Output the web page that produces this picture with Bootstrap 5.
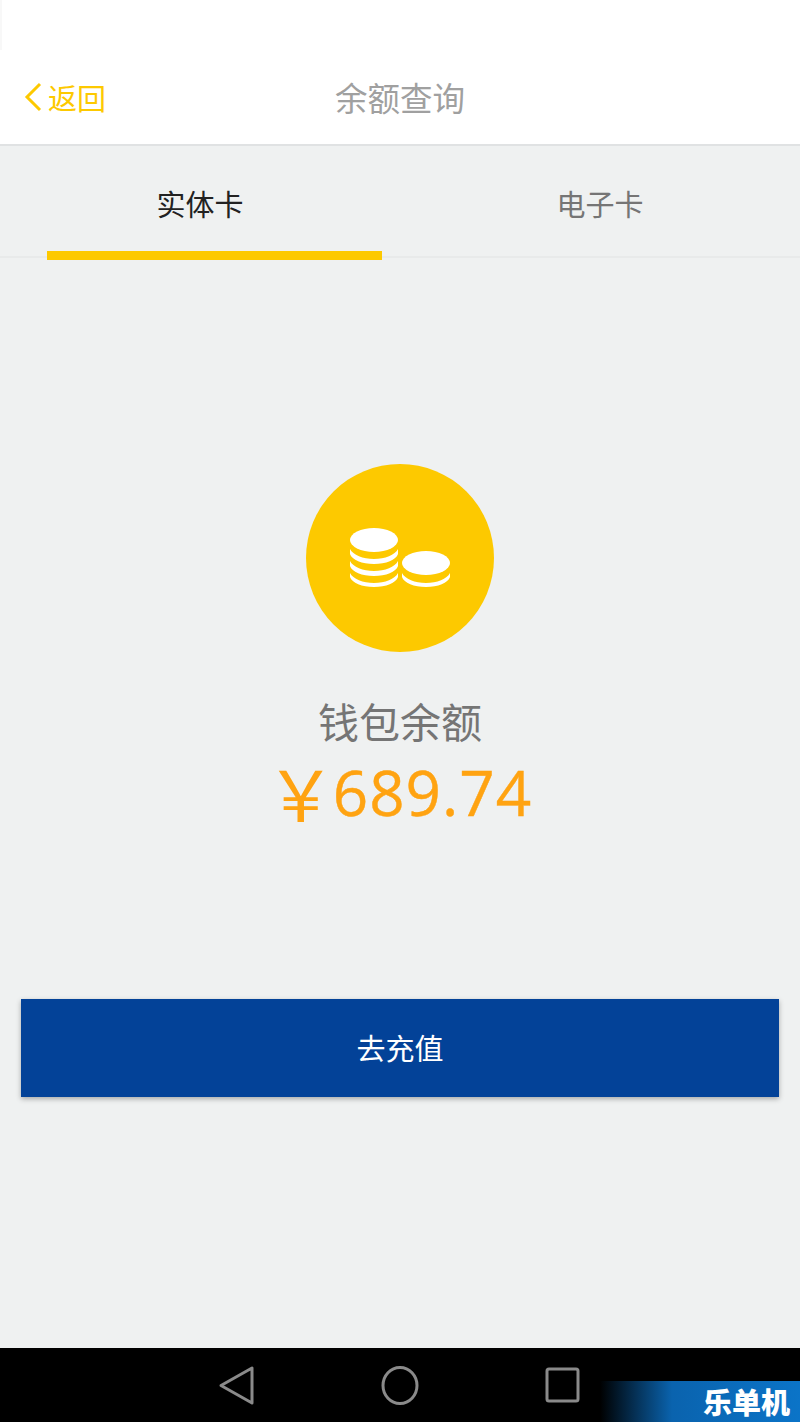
<!DOCTYPE html>
<html lang="zh-CN">
<head>
    <meta charset="UTF-8"/>
    <meta name="viewport" content="width=device-width, initial-scale=1.0"/>
    <title>余额查询</title>
    <link href="https://cdn.jsdelivr.net/npm/bootstrap@5.3.0/dist/css/bootstrap.min.css" rel="stylesheet"/>
    <style>
        html, body { height: 100%; }
        body { background: #eff1f1; font-family: "Noto Sans CJK SC", "Noto Sans", sans-serif; }
        .app-page { height: 1422px; overflow: hidden; }
        .status-space { height: 50px; background: #fff; border-left: 2px solid #f8f8f8; }
        .top-bar { height: 96px; background: #fff; border-bottom: 2px solid #e0e2e3; }
        .back-link { left: 24px; top: 50%; transform: translateY(-50%); color: #fdc900; font-size: 29px; line-height: 1; gap: 5px; }
        .top-title { color: #a0a0a0; font-size: 32.5px; line-height: 1; }
        .tab-row { height: 112px; border-bottom: 2px solid #e8eaea; }
        .tab-item { color: #757575; font-size: 29px; line-height: 1; padding-top: 43px; }
        .tab-item.on { color: #222; }
        .tab-line { left: 47px; bottom: -4px; width: 335px; height: 9px; background: #fdc900; }
        .balance-block { padding-top: 206px; }
        .coin-circle { width: 188px; height: 188px; background: #fdc900; }
        .balance-label { color: #757575; font-size: 41px; line-height: 1; margin-top: 48px; }
        .balance-num { color: #ffa311; font-size: 62px; line-height: 1; margin-top: 16px; font-family: "Open Sans", "Noto Sans CJK SC", sans-serif; letter-spacing: 1px; -webkit-text-stroke: .4px #ffa311; }
        .yen-mark { font-family: "Noto Sans CJK SC", sans-serif; font-size: 70px; line-height: 1; margin-left: -2px; margin-right: -4px; -webkit-text-stroke: 0; }
        .charge-btn { margin: 172px 21px 0; height: 98px; background: #034298; color: #fff; font-size: 29px; box-shadow: 0 2px 5px rgba(0,0,0,.3); }
        .nav-bar { height: 74px; background: #000; }
        .watermark { right: 0; bottom: 0; width: 200px; height: 41px; background: linear-gradient(90deg, #000 0%, #0a63ae 36%, #0b74c8 100%); color: #fff; font-size: 29px; font-weight: 900; line-height: 41px; padding-right: 10px; }
    </style>
</head>
<body>
<div class="app-page d-flex flex-column">
    <div class="status-space"></div>

    <!-- 顶部标题 -->
    <div class="top-bar position-relative d-flex align-items-center justify-content-center">
        <a class="back-link position-absolute d-flex align-items-center text-decoration-none" href="#">
            <svg width="19" height="30" viewBox="0 0 19 30"><path d="M16 2 3 15l13 13" fill="none" stroke="#fdc900" stroke-width="3"/></svg>
            <span>返回</span>
        </a>
        <span class="top-title">余额查询</span>
    </div>

    <!-- 卡片切换 -->
    <div class="tab-row position-relative row g-0">
        <div class="col-6 text-center tab-item on">实体卡</div>
        <div class="col-6 text-center tab-item">电子卡</div>
        <div class="tab-line position-absolute"></div>
    </div>

    <!-- 余额 -->
    <div class="balance-block d-flex flex-column align-items-center">
        <div class="coin-circle rounded-circle d-flex align-items-center justify-content-center">
            <svg width="102" height="60" viewBox="0 0 102 60" fill="#fff">
                <ellipse cx="25" cy="12" rx="24" ry="12"/>
                <path d="M1 21c3 6 13 10 24 10s21-4 24-10v5c-2 6-12 10-24 10S3 32 1 26z"/>
                <path d="M1 33c3 6 13 10 24 10s21-4 24-10v5c-2 6-12 10-24 10S3 44 1 38z"/>
                <path d="M1 45c3 6 13 10 24 10s21-4 24-10v4c-2 6-12 10-24 10S3 55 1 49z"/>
                <ellipse cx="77" cy="35" rx="24" ry="12"/>
                <path d="M53 45c3 6 13 10 24 10s21-4 24-10v4c-2 6-12 10-24 10s-22-4-24-10z"/>
            </svg>
        </div>
        <div class="balance-label">钱包余额</div>
        <div class="balance-num d-flex align-items-center"><span class="yen-mark">￥</span>689.74</div>
    </div>

    <button type="button" class="charge-btn btn rounded-0 border-0 d-block">去充值</button>

    <div class="flex-grow-1"></div>

    <!-- 系统导航 -->
    <div class="nav-bar position-relative flex-shrink-0">
        <svg class="position-absolute top-0 start-0" width="800" height="74" viewBox="0 0 800 74" fill="none" stroke="#8a8a8a" stroke-width="3" stroke-linejoin="round">
            <path d="M252 20v35l-31-17.500z"/>
            <ellipse cx="400" cy="37.500" rx="17" ry="18"/>
            <rect x="547" y="21" width="31" height="32" rx="2"/>
        </svg>
        <div class="watermark position-absolute text-end">乐单机</div>
    </div>
</div>
<script src="https://cdn.jsdelivr.net/npm/bootstrap@5.3.0/dist/js/bootstrap.bundle.min.js"></script>
</body>
</html>
